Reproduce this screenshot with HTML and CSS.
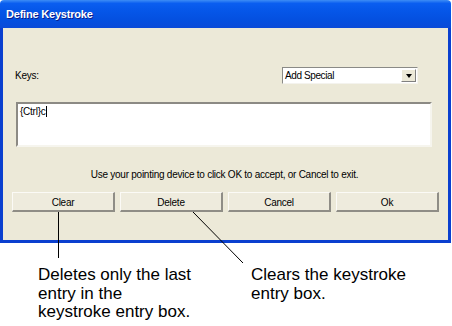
FILE: index.html
```html
<!DOCTYPE html>
<html>
<head>
<meta charset="utf-8">
<link rel="stylesheet" href="styles.css">
</head>
<body>
<div class="window">
  <div class="titlebar">Define Keystroke</div>
  <div class="client">
    <div class="keys-row">
      <span class="label">Keys:</span>
      <div class="select">
        <span class="select-text">Add Special</span>
        <span class="select-btn"><span class="tri"></span></span>
      </div>
    </div>
    <div class="entry">{Ctrl}c<span class="caret"></span></div>
    <div class="hint">Use your pointing device to click OK to accept, or Cancel to exit.</div>
    <div class="buttons">
      <div class="btn">Clear</div>
      <div class="btn">Delete</div>
      <div class="btn">Cancel</div>
      <div class="btn">Ok</div>
    </div>
  </div>
</div>
<div class="captions">
  <div class="cap cap-left">Deletes only the last<br>entry in the<br>keystroke entry box.</div>
  <div class="cap cap-right">Clears the keystroke<br>entry box.</div>
</div>
<svg class="callouts" width="452" height="326" viewBox="0 0 452 326">
  <line x1="58.5" y1="212" x2="58.5" y2="258" stroke="#000" stroke-width="1"/>
  <line x1="193" y1="212" x2="243" y2="263" stroke="#000" stroke-width="1"/>
</svg>
</body>
</html>
```
FILE: styles.css
```css
html, body {
  margin: 0;
  padding: 0;
  background: #fff;
}
body {
  width: 452px;
  height: 326px;
  position: relative;
  overflow: hidden;
  font-family: "Liberation Sans", Arial, sans-serif;
}
.window {
  width: 451px;
  display: flex;
  flex-direction: column;
}
.titlebar {
  height: 28px;
  box-sizing: border-box;
  padding: 0 0 1px 6px;
  display: flex;
  align-items: center;
  color: #fff;
  font-weight: bold;
  font-size: 11px;
  letter-spacing: -0.2px;
  text-shadow: 1px 1px 0 #0a1e8c;
  background: linear-gradient(#3d8df5 0%, #0a5ef0 12%, #0556e8 40%, #0450e0 70%, #0a4ad8 100%);
  border-radius: 4px 4px 0 0;
}
.client {
  height: 215px;
  box-sizing: border-box;
  background: #ece9d8;
  border: 3px solid #0a3fcf;
  border-top: 0;
  padding: 0 9px 0 9px;
  font-size: 10px;
  letter-spacing: -0.25px;
  color: #000;
  display: flex;
  flex-direction: column;
}
.keys-row {
  display: flex;
  align-items: center;
  justify-content: space-between;
  margin-top: 39px;
  height: 17px;
}
.label {
  padding-left: 3px;
}
.select {
  width: 136px;
  height: 17px;
  box-sizing: border-box;
  margin-right: 21px;
  background: #fff;
  border-top: 1px solid #8a8a86;
  border-left: 1px solid #8a8a86;
  border-right: 1px solid #f4f3ee;
  border-bottom: 1px solid #f4f3ee;
  display: flex;
  align-items: center;
}
.select-text {
  flex: 1;
  padding-left: 2px;
  letter-spacing: -0.4px;
}
.select-btn {
  width: 15px;
  height: 13px;
  margin-right: 1px;
  background: #ece9d8;
  border-top: 1px solid #fff;
  border-left: 1px solid #fff;
  border-right: 1px solid #808080;
  border-bottom: 1px solid #808080;
  box-sizing: border-box;
  display: flex;
  align-items: center;
  justify-content: center;
}
.tri {
  width: 0;
  height: 0;
  border-left: 3px solid transparent;
  border-right: 3px solid transparent;
  border-top: 4px solid #000;
}
.entry {
  margin-top: 18px;
  margin-left: 4px;
  width: 416px;
  height: 45px;
  box-sizing: border-box;
  background: #fff;
  border-top: 2px solid #8c8a84;
  border-left: 2px solid #8c8a84;
  border-right: 2px solid #f6f5ee;
  border-bottom: 2px solid #f6f5ee;
  padding: 2px 0 0 2px;
  font-size: 10px;
  line-height: 12px;
  display: flex;
  align-items: flex-start;
}
.caret {
  display: inline-block;
  width: 1px;
  height: 11px;
  background: #000;
  margin-left: 1px;
}
.hint {
  margin-top: 22px;
  text-align: center;
  height: 12px;
  line-height: 12px;
  padding-right: 2px;
}
.buttons {
  margin-top: 11px;
  display: flex;
  gap: 5px;
}
.btn {
  width: 104px;
  height: 20px;
  box-sizing: border-box;
  background: #eeebdd;
  border-top: 1px solid #fbfaf6;
  border-left: 1px solid #fbfaf6;
  border-right: 2px solid #8f8d86;
  border-bottom: 2px solid #8f8d86;
  display: flex;
  align-items: center;
  justify-content: center;
  padding-top: 1px;
}
.captions {
  display: flex;
  margin-top: 23px;
  padding-left: 38px;
  gap: 0;
}
.cap {
  font-size: 17px;
  line-height: 18.5px;
  color: #000;
}
.cap-left {
  width: 213px;
}
.callouts {
  position: absolute;
  left: 0;
  top: 0;
  pointer-events: none;
}
```
